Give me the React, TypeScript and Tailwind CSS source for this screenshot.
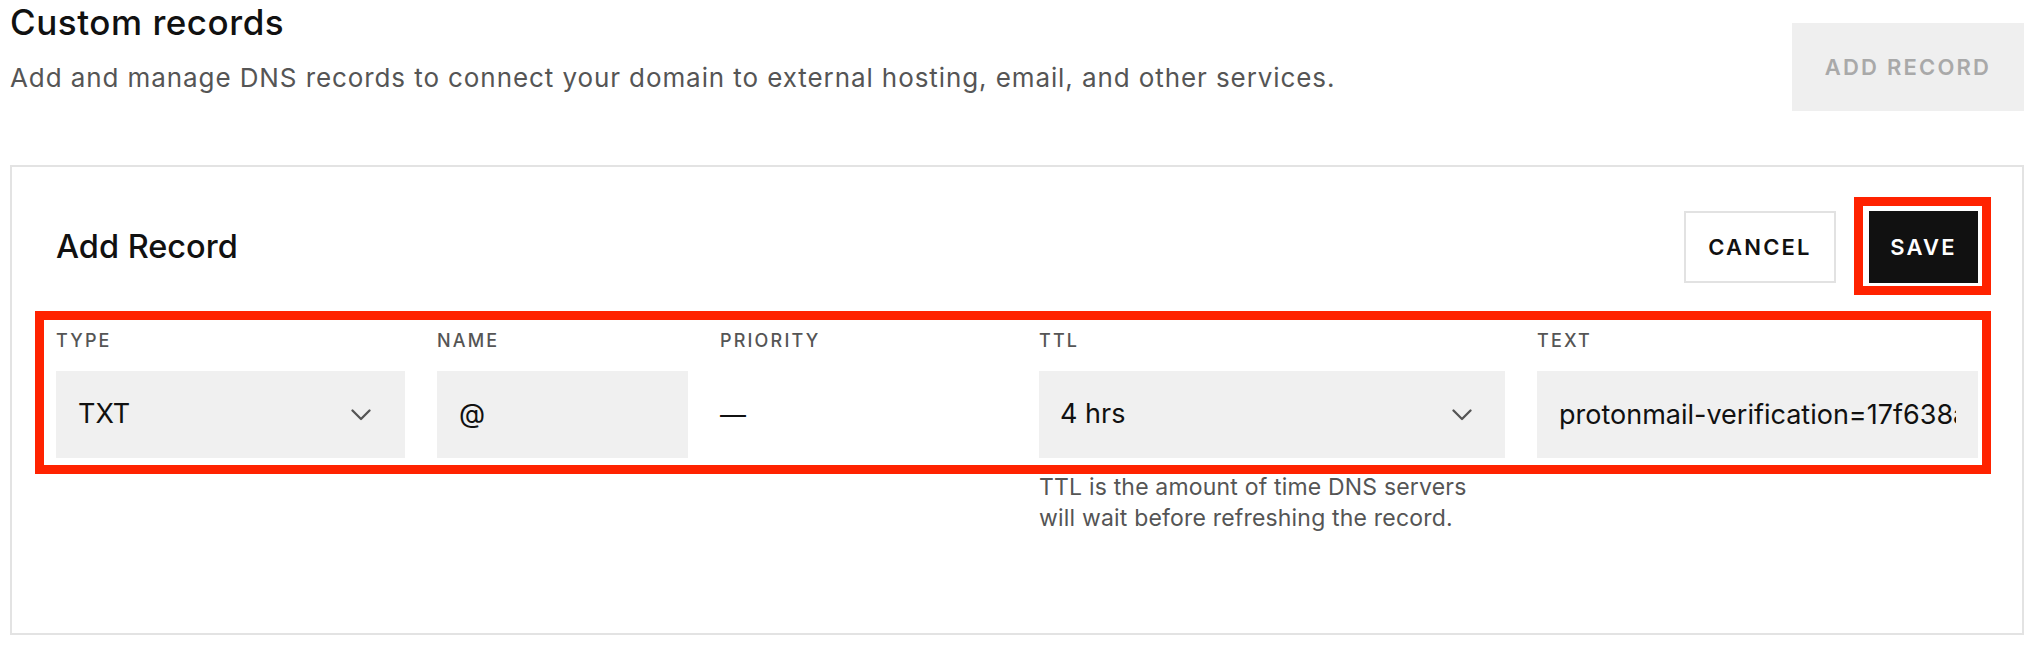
import React from "react";

function Chevron() {
  return (
    <svg width="20" height="12" viewBox="0 0 20 12" fill="none" className="shrink-0">
      <path d="M1.5 1.5 L10 10 L18.5 1.5" stroke="#555" strokeWidth="2.3" strokeLinecap="round" strokeLinejoin="round" />
    </svg>
  );
}

const labelCls = "text-[18px] leading-[24px] font-medium tracking-[0.12em] text-[#555]";
const fieldCls = "h-[87px] bg-[#f0f0f0] text-[27px] text-[#111]";
const btnText = "text-[22px] font-semibold tracking-[0.1em]";

export default function App() {
  return (
    <div
      className="min-h-screen bg-white pl-[10px] pr-[9px] pt-[2px] text-[#111]"
      style={{ fontFamily: "Inter, 'Noto Sans', sans-serif" }}
    >
      {/* Section heading */}
      <div className="flex items-start justify-between">
        <div>
          <h2 className="text-[35px] leading-[41px] font-medium tracking-[0.015em] text-[#111]">Custom records</h2>
          <p className="mt-[19px] text-[26px] leading-[32px] tracking-[0.035em] text-[#555]">
            Add and manage DNS records to connect your domain to external hosting, email, and other services.
          </p>
        </div>
        <button className={`mt-[21px] h-[88px] w-[232px] bg-[#efefef] text-[#a9a9a9] ${btnText}`}>
          ADD RECORD
        </button>
      </div>

      {/* Add record card */}
      <div className="mt-[54px] h-[470px] border-2 border-[#e3e3e3] p-[44px]">
        <div className="flex h-[72px] items-center justify-between">
          <h3 className="text-[32.5px] leading-[40px] font-medium text-[#111]">Add Record</h3>
          <div className="flex gap-[33px]">
            <button className={`h-[72px] w-[152px] border-2 border-[#e2e2e2] bg-white text-[#111] ${btnText}`}>
              CANCEL
            </button>
            <div className="relative">
              <button className={`h-[72px] w-[109px] bg-[#111] text-white ${btnText}`}>SAVE</button>
              <span className="pointer-events-none absolute -left-[15px] -right-[13px] -top-[14px] -bottom-[12px] border-[9px] border-[#ff2200]" />
            </div>
          </div>
        </div>

        <div className="relative mt-[46px]">
          <div className="grid grid-cols-[349px_251px_287px_466px_1fr] gap-x-[32px]">
            <div className={labelCls}>TYPE</div>
            <div className={labelCls}>NAME</div>
            <div className={labelCls}>PRIORITY</div>
            <div className={labelCls}>TTL</div>
            <div className={labelCls}>TEXT</div>

            <div className={`mt-[18px] flex items-center justify-between pl-[22px] pr-[34px] ${fieldCls}`}>
              <span>TXT</span>
              <Chevron />
            </div>
            <div className={`mt-[18px] flex items-center pl-[22px] ${fieldCls}`}>
              <span>@</span>
            </div>
            <div className="mt-[18px] flex h-[87px] items-center text-[26px] text-[#111]">
              <span>—</span>
            </div>
            <div className={`mt-[18px] flex items-center justify-between pl-[21px] pr-[33px] ${fieldCls}`}>
              <span>4 hrs</span>
              <Chevron />
            </div>
            <input
              readOnly
              value="protonmail-verification=17f638a2c9e4b5d0f1a8e7c6b3d2f9a0"
              className={`mt-[18px] w-full min-w-0 px-[22px] outline-none ${fieldCls}`}
            />
          </div>
          <span className="pointer-events-none absolute -left-[21px] -right-[13px] -top-[18px] -bottom-[16px] border-[9px] border-[#ff2200]" />
        </div>

        <div className="mt-[14px] grid grid-cols-[349px_251px_287px_466px_1fr] gap-x-[32px]">
          <p className="col-start-4 max-w-[450px] text-[23px] leading-[31px] tracking-[0.008em] text-[#555]">
            TTL is the amount of time DNS servers will wait before refreshing the record.
          </p>
        </div>
      </div>
    </div>
  );
}
